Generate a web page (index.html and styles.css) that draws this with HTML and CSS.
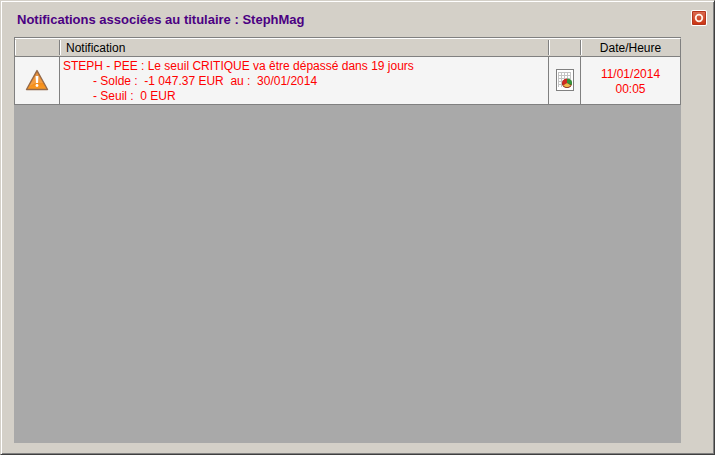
FILE: index.html
```
<!DOCTYPE html>
<html lang="fr">

<head>
  <meta charset="utf-8">
  <title>Notifications</title>
  <link rel="stylesheet" href="styles.css">
</head>

<body>
  <div class="window">
    <header class="title-bar">
      <h1>Notifications associées au titulaire : StephMag</h1>
      <button type="button" class="close-button" aria-label="Fermer">
        <svg width="16" height="16" viewBox="0 0 16 16">
          <defs>
            <linearGradient id="close-fill" x1="0" y1="0" x2="0" y2="1">
              <stop offset="0" stop-color="#d9694f" />
              <stop offset="1" stop-color="#cb3514" />
            </linearGradient>
          </defs>
          <rect width="16" height="16" rx="2" fill="#fff" />
          <rect x="1" y="1" width="14" height="14" rx="1" fill="#b5351c" />
          <rect x="2" y="2" width="12" height="12" fill="url(#close-fill)" />
          <circle cx="8" cy="8" r="3.3" fill="none" stroke="#fff1e8" stroke-width="1.8" />
        </svg>
      </button>
    </header>

    <main class="grid">
      <table class="notifications">
        <colgroup>
          <col class="col-level">
          <col>
          <col class="col-action">
          <col class="col-date">
        </colgroup>
        <thead>
          <tr>
            <th></th>
            <th class="label">Notification</th>
            <th></th>
            <th>Date/Heure</th>
          </tr>
        </thead>
        <tbody>
          <tr>
            <td>
              <svg class="icon" width="24" height="22" viewBox="0 0 24 22">
                <defs>
                  <linearGradient id="warning-fill" x1="0" y1="0" x2="0" y2="1">
                    <stop offset="0" stop-color="#cf7420" />
                    <stop offset="0.5" stop-color="#ee8416" />
                    <stop offset="1" stop-color="#fb9a22" />
                  </linearGradient>
                </defs>
                <path d="M12 1.5 L22.5 20.5 H1.5 Z" fill="url(#warning-fill)" stroke="#94694a" stroke-width="1.4" stroke-linejoin="round" />
                <path d="M12 3.5 L18 14 Q11 12.5 4.5 17 Z" fill="#fff" opacity="0.18" />
                <path d="M10.6 7 h2.8 l-0.4 7 h-2 Z" fill="#fff" />
                <circle cx="12" cy="16.5" r="1.4" fill="#fff" />
              </svg>
            </td>
            <td class="message">STEPH - PEE : Le seuil CRITIQUE va être dépassé dans 19 jours
<span class="detail">- Solde :  -1 047.37 EUR  au :  30/01/2014</span>
<span class="detail">- Seuil :  0 EUR</span></td>
            <td>
              <button type="button" class="chart-button" aria-label="Voir le graphique">
                <svg class="icon" width="18" height="22" viewBox="0 0 18 22">
                  <rect x="0.5" y="0.5" width="17" height="21" fill="#fff" stroke="#808080" />
                  <path d="M2.5 3 V18 M5.5 3 V18 M8.5 3 V18 M11.5 3 V18 M14.5 3 V18 M2 3.5 H15 M2 6.5 H15 M2 9.5 H15 M2 12.5 H15 M2 15.5 H15" stroke="#c4c4c4" fill="none" />
                  <ellipse cx="11" cy="14.5" rx="5" ry="4.5" fill="#842416" />
                  <path d="M11 14 V9.5 A5 4.5 0 0 0 7 16.5 Z" fill="#cf2a20" />
                  <path d="M11 14 V9.5 A5 4.5 0 0 1 15.5 16 Z" fill="#35943a" />
                  <path d="M11 14 L15 16.5 Q11 20 7 16.5 Z" fill="#edb84c" />
                </svg>
              </button>
            </td>
            <td class="date">11/01/2014<br>00:05</td>
          </tr>
        </tbody>
      </table>
    </main>
  </div>
</body>

</html>
```

FILE: styles.css
```
* {
  box-sizing: border-box;
}

body {
  margin: 0;
  font-family: "Liberation Sans", Arial, sans-serif;
  font-size: 12px;
  line-height: 15px;
  color: #000;
  background-color: #d4d0c8;
}

/* Raised window frame */
.window {
  display: flex;
  flex-direction: column;
  min-height: 100vh;
  padding: 7px 33px 11px 13px;
  background-color: #d4d0c8;
  border: 1px solid #d4d0c8;
  border-right-color: #404040;
  border-bottom-color: #404040;
  box-shadow: inset 1px 1px #fff, inset -1px -1px #808080;
}

.title-bar {
  display: flex;
  justify-content: space-between;
  align-items: center;
  height: 29px;
  padding: 2px 0 8px 3px;
  margin-right: -26px;
}

h1 {
  margin: 0;
  font-size: 13px;
  font-weight: bold;
  color: #4b0082;
}

button {
  padding: 0;
  border: none;
  background: none;
  cursor: pointer;
}

.close-button {
  align-self: flex-start;
}

.close-button svg,
.chart-button,
.icon {
  display: block;
}

.chart-button,
.icon {
  margin: 0 auto;
}

.grid {
  flex: 1;
  background-color: #a9a9a9;
}

.notifications {
  width: 100%;
  table-layout: fixed;
  border-collapse: separate;
  border-spacing: 0;
  border-top: 1px solid #808080;
  border-left: 1px solid #808080;
}

.col-level {
  width: 45px;
}

.col-action {
  width: 32px;
}

.col-date {
  width: 100px;
}

th {
  height: 19px;
  padding: 2px 0 0;
  font-weight: normal;
  border-top: 1px solid #fff;
  border-bottom: 1px solid #808080;
  /* short etched separators between the headings */
  background:
    linear-gradient(#808080, #808080) right 1px / 1px 15px no-repeat,
    linear-gradient(#fff, #fff) left 1px / 1px 15px no-repeat,
    #d4d0c8;
}

th:last-child {
  border-right: 1px solid #808080;
  background:
    linear-gradient(#fff, #fff) left 1px / 1px 15px no-repeat,
    #d4d0c8;
}

.label {
  padding-left: 6px;
  text-align: left;
}

td {
  height: 48px;
  padding: 0 0 2px;
  color: #f00;
  background-color: #f5f5f5;
  border-right: 1px solid #808080;
  border-bottom: 1px solid #808080;
}

.message {
  padding: 2px 0 0 3px;
  white-space: pre-wrap;
}

.detail {
  padding-left: 30px;
}

.date {
  padding: 2px 0 0;
  text-align: center;
}
```
